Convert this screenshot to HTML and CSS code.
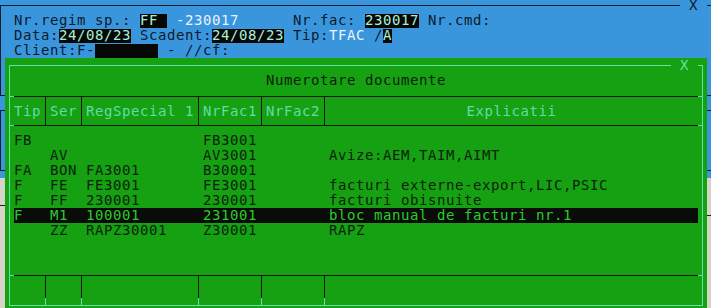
FILE: index.html
```html
<!DOCTYPE html>
<html>
<head>
<meta charset="utf-8">
<title>Numerotare documente</title>
<link rel="stylesheet" href="styles.css">
</head>
<body>
<div class="desk">
  <div class="under under-l"></div>
  <div class="under under-r"></div>
  <div class="win">
    <div class="win-frame">
      <div class="line">Nr.regim sp.: <span class="fld">FF </span> <span class="lt">-230017</span>      Nr.fac: <span class="fld">230017</span> Nr.cmd:</div>
      <div class="line">Data:<span class="fld">24/08/23</span> Scadent:<span class="fld">24/08/23</span> Tip:<span class="lt">TFAC</span> /<span class="fld">A</span></div>
      <div class="line">Client:F-<span class="fld">       </span> - //cf:</div>
      <div class="win-sep s1"></div>
      <div class="win-sep s2"></div>
      <div class="win-gap"></div>
    </div>
    <span class="win-x">X</span>
  </div>

  <div class="dlg">
    <div class="frame">
      <div class="title">Numerotare documente</div>
      <div class="hline"></div>
      <div class="cols head">
        <div class="c">Tip</div><div class="c">Ser</div><div class="c">RegSpecial 1</div><div class="c">NrFac1</div><div class="c">NrFac2</div><div class="c exp">Explicatii</div>
      </div>
      <div class="hline"></div>
      <div class="body">
        <div class="cols row"><div class="c">FB</div><div class="c"></div><div class="c"></div><div class="c">FB3001</div><div class="c"></div><div class="c"></div></div>
        <div class="cols row"><div class="c"></div><div class="c">AV</div><div class="c"></div><div class="c">AV3001</div><div class="c"></div><div class="c">Avize:AEM,TAIM,AIMT</div></div>
        <div class="cols row"><div class="c">FA</div><div class="c">BON</div><div class="c">FA3001</div><div class="c">B30001</div><div class="c"></div><div class="c"></div></div>
        <div class="cols row"><div class="c">F</div><div class="c">FE</div><div class="c">FE3001</div><div class="c">FE3001</div><div class="c"></div><div class="c">facturi externe-export,LIC,PSIC</div></div>
        <div class="cols row"><div class="c">F</div><div class="c">FF</div><div class="c">230001</div><div class="c">230001</div><div class="c"></div><div class="c">facturi obisnuite</div></div>
        <div class="cols row sel"><div class="c">F</div><div class="c">M1</div><div class="c">100001</div><div class="c">231001</div><div class="c"></div><div class="c">bloc manual de facturi nr.1</div></div>
        <div class="cols row"><div class="c"></div><div class="c">ZZ</div><div class="c">RAPZ30001</div><div class="c">Z30001</div><div class="c"></div><div class="c">RAPZ</div></div>
      </div>
      <div class="hline"></div>
      <div class="cols foot">
        <div class="c"></div><div class="c"></div><div class="c"></div><div class="c"></div><div class="c"></div><div class="c"></div>
      </div>
      <span class="dlg-x">X</span>
    </div>
  </div>
</div>
</body>
</html>
```

FILE: styles.css
```css
* {
  box-sizing: border-box;
}

html,
body {
  margin: 0;
  padding: 0;
}

body {
  width: 711px;
  height: 308px;
  overflow: hidden;
  background: #d7d3c6;
  font-family: "DejaVu Sans Mono", monospace;
  font-size: 14px;
  letter-spacing: 0.57px;
}

.desk {
  position: relative;
  width: 711px;
  height: 308px;
  overflow: hidden;
}

/* remnants of windows underneath */
.under {
  position: absolute;
  height: 1px;
  background: #1a1e28;
}

.under-l {
  left: 0;
  top: 205px;
  width: 6px;
}

.under-r {
  right: 0;
  top: 215px;
  width: 6px;
}

/* blue document window */
.win {
  position: absolute;
  left: -4px;
  top: -2px;
  width: 740px;
  height: 180px;
  background: #3a96dc;
  color: #0c1a2e;
}

.win-frame {
  position: relative;
  margin: 7px 0 0 4px;
  height: 166px;
  border: 1px solid #0e1c30;
  padding: 7px 0 0 13px;
}

.line {
  height: 15px;
  line-height: 15px;
  white-space: pre;
}

.fld {
  display: inline-block;
  height: 15px;
  line-height: 15px;
  vertical-align: top;
  background: linear-gradient(#060806, #060806) 0 1px / 100% 14px no-repeat;
  color: #a9efd8;
}

.lt {
  color: #e8f3ff;
}

.win-sep {
  height: 1px;
  margin-left: -13px;
  background: #0e1c30;
}

.win-sep.s1 {
  margin-top: 37px;
}

.win-sep.s2 {
  margin-top: 14px;
}

.win-gap {
  position: absolute;
  left: -1px;
  top: 90px;
  width: 1px;
  height: 14px;
  background: #3a96dc;
}

.win-x {
  position: absolute;
  left: 684px;
  top: 0;
  height: 15px;
  line-height: 15px;
  padding: 0 9px;
  background: #3a96dc;
  white-space: pre;
}

/* green dialog */
.dlg {
  position: absolute;
  left: 5px;
  top: 58px;
  width: 702px;
  height: 250px;
  padding: 7px 4px 0 4px;
  background: #15a112;
  color: #0b220b;
}

.frame {
  position: relative;
  height: 241px;
  border: 1px solid #5ae6a0;
}

.dlg-x {
  position: absolute;
  left: 661px;
  top: -8px;
  height: 15px;
  line-height: 15px;
  padding: 0 9px;
  background: #15a112;
  color: #5ae6a0;
}

.title {
  height: 30px;
  padding-top: 7px;
  line-height: 15px;
  text-align: center;
  white-space: pre;
}

.hline {
  height: 1px;
  background: linear-gradient(to right, #5ae6a0 0 4px, #0a160a 4px calc(100% - 4px), #5ae6a0 calc(100% - 4px));
}

.cols {
  display: grid;
  grid-template-columns: 32px 36px 117px 63px 63px 1fr;
  margin: 0 4px;
}

.c {
  padding-left: 4px;
  white-space: pre;
  overflow: hidden;
}

.c:first-child {
  padding-left: 0;
}

.head {
  height: 28px;
  line-height: 28px;
  color: #62dca6;
}

.head .c:not(:last-child) {
  border-right: 1px solid #0a160a;
}

.head .exp {
  padding-left: 0;
  text-align: center;
}

.body {
  height: 149px;
  padding: 7px 0;
}

.row {
  height: 15px;
  line-height: 15px;
}

.row.sel {
  background: #0a0c0a;
  color: #2ccb2c;
}

.foot {
  height: 29px;
}

.foot .c:not(:last-child) {
  background: linear-gradient(#0a160a 0 22px, #5ae6a0 22px) right top / 1px 100% no-repeat;
}
```
